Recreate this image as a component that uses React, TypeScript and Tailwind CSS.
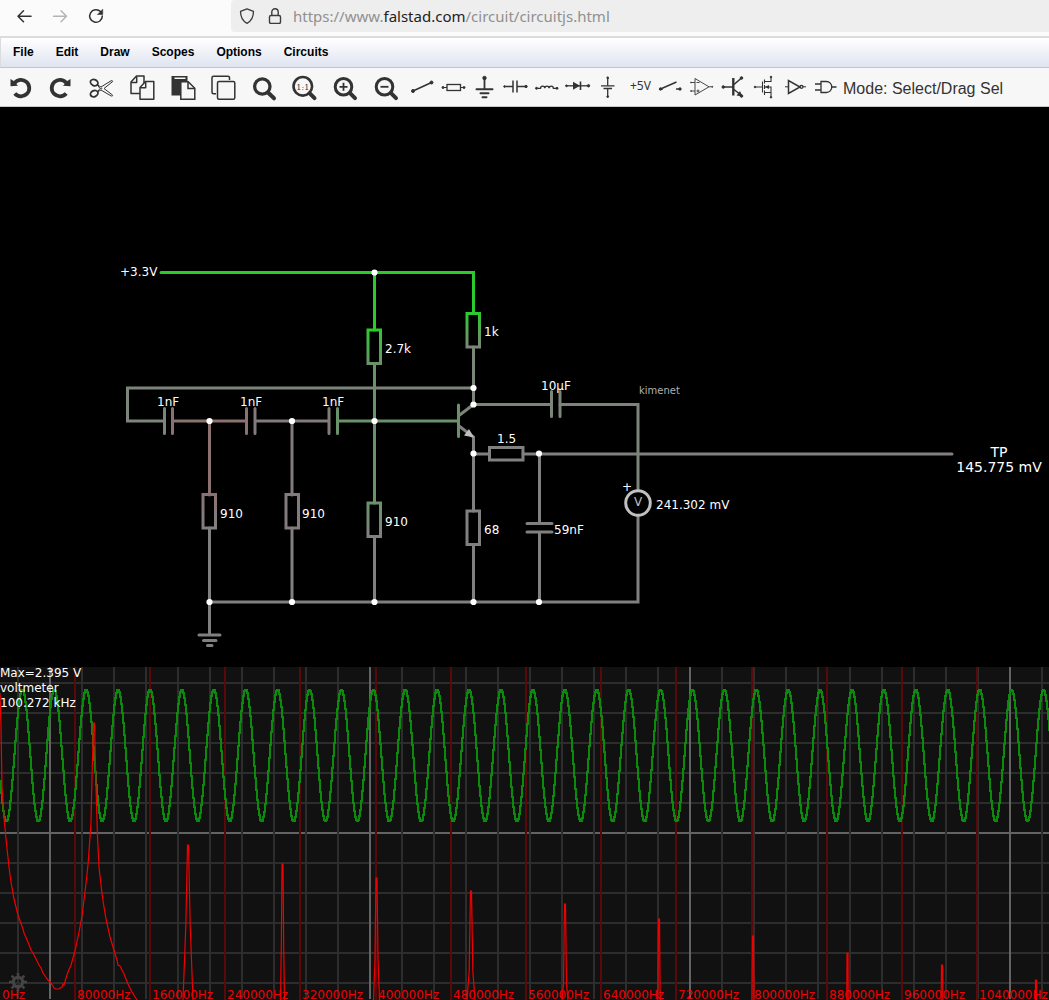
import React from 'react';

const menus = ['File', 'Edit', 'Draw', 'Scopes', 'Options', 'Circuits'];

// Large editing tools, each drawn in a 24x24 box
const editTools: { name: string; icon: React.ReactNode }[] = [
  {
    name: 'Undo',
    icon: (
      <>
        <path d="M6.500 7.200A8.200 8.200 0 1 1 6.800 17.400" fill="none" strokeWidth="3.800" />
        <path d="M2.500 3l2.500 1.500 5 5.200-7.500.5z" stroke="none" />
      </>
    ),
  },
  {
    name: 'Redo',
    icon: (
      <>
        <path d="M17.500 7.200A8.200 8.200 0 1 0 17.200 17.400" fill="none" strokeWidth="3.800" />
        <path d="M21.500 3l-2.500 1.500-5 5.200 7.500.5z" stroke="none" />
      </>
    ),
  },
  {
    name: 'Cut',
    icon: (
      <g fill="none">
        <ellipse cx="5.2" cy="6.6" rx="3.9" ry="3" strokeWidth="1.8" transform="rotate(25 5.2 6.6)" />
        <ellipse cx="5.2" cy="17.6" rx="3.9" ry="3" strokeWidth="1.8" transform="rotate(-25 5.2 17.6)" />
        <path d="M8.5 9l3.5 2L22 4.8c1.4-.4 2 .2 1.6.8L15 12.5l8.6 6.6c.4.8-.6 1.2-1.6.8L12 14l-3.5 1.8M8.5 9l2.5 3.5-2.5 3.3" strokeWidth="1" />
        <circle cx="12.2" cy="12.5" r=".6" strokeWidth=".8" />
      </g>
    ),
  },
  {
    name: 'Copy',
    icon: (
      <g strokeWidth="1.5" strokeLinejoin="round">
        <path d="M1 17.5V6l5.500-6H14v17.500z" fill="#f7f7f7" />
        <path d="M1.2 6.5h5.500V.5" fill="none" />
        <path d="M10 23.3V11.500L15.500 5.500H23.800v17.800z" fill="#f7f7f7" />
        <path d="M10.200 11.800h5.500V5.800" fill="none" />
      </g>
    ),
  },
  {
    name: 'Paste',
    icon: (
      <>
        <path d="M.5 0h16v19.500H.5z" stroke="none" />
        <path d="M3.500 1.500h11v1.500h-11z" fill="#f7f7f7" stroke="none" />
        <path d="M9.800 23.300V5.800h7.400l6.600 6.500v11z" fill="#f7f7f7" strokeWidth="1.5" />
        <path d="M17 6v6.500h6.500" fill="none" strokeWidth="1.5" />
      </>
    ),
  },
  {
    name: 'Duplicate',
    icon: (
      <g fill="none" strokeWidth="1.5">
        <path d="M5 17.800H2.500a1.500 1.500 0 0 1-1.500-1.500V1.700A1.500 1.500 0 0 1 2.500.2h14.500a1.500 1.500 0 0 1 1.500 1.500V4" />
        <rect x="6.500" y="5.500" width="17.300" height="17.800" rx="1.500" />
      </g>
    ),
  },
  {
    name: 'Find',
    icon: (
      <g fill="none">
        <circle cx="10.300" cy="10.500" r="7.700" strokeWidth="3.300" />
        <path d="M16 16.500l6 5.800" strokeWidth="4" strokeLinecap="round" />
      </g>
    ),
  },
  {
    name: 'Zoom 100%',
    icon: (
      <>
        <circle cx="10.800" cy="10.300" r="9.300" fill="none" strokeWidth="2.600" />
        <path d="M17.500 17.200l5 5" strokeWidth="4" strokeLinecap="round" />
        <text x="10.800" y="13.500" textAnchor="middle" stroke="none" className="font-['DejaVu_Serif',serif] text-[8px]">
          1:1
        </text>
      </>
    ),
  },
  {
    name: 'Zoom in',
    icon: (
      <g fill="none">
        <circle cx="10.500" cy="10.800" r="8.300" strokeWidth="3" />
        <path d="M17 17.200l5 5" strokeWidth="4" strokeLinecap="round" />
        <path d="M6.500 10.800h8M10.500 6.800v8" strokeWidth="1.800" />
      </g>
    ),
  },
  {
    name: 'Zoom out',
    icon: (
      <g fill="none">
        <circle cx="10.500" cy="10.800" r="8.300" strokeWidth="3" />
        <path d="M17 17.200l5 5" strokeWidth="4" strokeLinecap="round" />
        <path d="M6.500 10.800h8" strokeWidth="1.800" />
      </g>
    ),
  },
];

// Circuit elements, each drawn in a 30x24 box
const elementTools: { name: string; icon: React.ReactNode }[] = [
  {
    name: 'Wire',
    icon: (
      <>
        <path d="M6 15L24.500 6.500" strokeWidth="1.600" />
        <circle cx="6" cy="15" r="1.500" />
        <circle cx="24.500" cy="6.500" r="1.500" />
      </>
    ),
  },
  {
    name: 'Resistor',
    icon: (
      <>
        <path d="M5 11.500h4M22.500 11.500h4" />
        <rect x="9" y="8.500" width="13.500" height="6" fill="none" strokeWidth="1.300" />
        <circle cx="5" cy="11.500" r="1" />
        <circle cx="26" cy="11.500" r="1" />
      </>
    ),
  },
  {
    name: 'Ground',
    icon: (
      <>
        <circle cx="15.500" cy="2" r="1.700" />
        <path d="M15.500 2v11.500" strokeWidth="1.800" />
        <path d="M7.500 13.300h16M11.500 17.300h8M13.500 21.200h4" strokeWidth="2" strokeLinecap="round" />
      </>
    ),
  },
  {
    name: 'Capacitor',
    icon: (
      <>
        <path d="M4 10.500h9M17 10.500h9" strokeWidth="1.300" />
        <path d="M13 4.500v12M17 4.500v12" strokeWidth="1.500" />
        <circle cx="4.500" cy="10.500" r=".8" />
        <circle cx="26" cy="10.500" r="1.200" />
      </>
    ),
  },
  {
    name: 'Inductor',
    icon: (
      <>
        <path d="M5.500 12.300h4c0-3 4.300-3 4.300 0 0-3 4.300-3 4.300 0 0-3 4.300-3 4.300 0h4" fill="none" strokeWidth="1.300" />
        <circle cx="5.500" cy="12.300" r="1" />
        <circle cx="26" cy="12.300" r="1" />
      </>
    ),
  },
  {
    name: 'Diode',
    icon: (
      <>
        <path d="M4 9.800h23" strokeWidth="1.300" />
        <path d="M11 5.800v8l7-4z" stroke="none" />
        <path d="M18.500 5.500v8.500" strokeWidth="1.600" />
        <circle cx="4.500" cy="9.800" r=".9" />
        <circle cx="26.500" cy="9.800" r="1.200" />
      </>
    ),
  },
  {
    name: 'Battery',
    icon: (
      <>
        <path d="M14.700 1.500v8.300M14.700 12.500v8" strokeWidth="1.300" />
        <path d="M8 9.800h13.500M10.500 12.500h8.500" strokeWidth="1.300" />
        <circle cx="14.700" cy="1.800" r=".9" />
        <circle cx="14.700" cy="20.600" r=".9" />
      </>
    ),
  },
  {
    name: 'Voltage source',
    icon: (
      <text x="6" y="14" stroke="none" className="font-['Noto_Sans',sans-serif] text-[12px]">
        +5V
      </text>
    ),
  },
  {
    name: 'Switch',
    icon: (
      <>
        <path d="M5.500 13l16-7M21 13h4M5 13h3" strokeWidth="1.400" />
        <circle cx="5.500" cy="13" r="1.200" />
        <circle cx="25" cy="13" r="1.200" />
      </>
    ),
  },
  {
    name: 'Op-amp',
    icon: (
      <g fill="none" strokeWidth=".9">
        <path d="M9 2.500v16.500l14-8.200zM5 6.500h4M5 15h4M23 10.800h3.500M10.500 6.500h3M10.500 15h3M12 13.500v3" />
        <circle cx="5" cy="6.500" r=".5" />
        <circle cx="5" cy="15" r=".5" />
        <circle cx="26.300" cy="10.800" r=".5" />
      </g>
    ),
  },
  {
    name: 'Transistor',
    icon: (
      <>
        <path d="M6 11h10.500M17 8.500l7.500-6.500M17 13.500l7.500 6" strokeWidth="1.600" />
        <path d="M16.300 2v17.500" strokeWidth="2.400" />
        <path d="M25.500 20.500l-6-1 3.500-4.500z" stroke="none" />
        <circle cx="6.300" cy="11" r="1.300" />
        <circle cx="24.500" cy="2" r="1.300" />
        <circle cx="24.500" cy="20" r="1.300" />
      </>
    ),
  },
  {
    name: 'MOSFET',
    icon: (
      <>
        <path d="M7 11h7M14.500 5.500v11M16.500 3.500v4M16.500 9v4M16.500 14.500v4.500M16.500 5.500h6.500V1M16.500 16.500h6.500V21M17 11h6v5" fill="none" strokeWidth="1.100" />
        <path d="M17 11l4-2v4z" stroke="none" />
        <circle cx="7" cy="11" r=".8" />
        <circle cx="23" cy="1" r=".8" />
        <circle cx="23" cy="21.300" r=".8" />
      </>
    ),
  },
  {
    name: 'Inverter',
    icon: (
      <g fill="none">
        <path d="M6 10.800h3M24 10.800h3" />
        <path d="M9.500 4.500v13l11.500-6.500z" strokeWidth="1.500" />
        <circle cx="22.500" cy="10.800" r="1.500" strokeWidth="1.300" />
      </g>
    ),
  },
  {
    name: 'AND gate',
    icon: (
      <g fill="none" strokeWidth="1.300">
        <path d="M5 8h6M5 14h6M21 11h5.500" />
        <path d="M11 5.500h5.500a5.300 5.500 0 0 1 0 11H11z" />
      </g>
    ),
  },
];

const GREEN = '#2bcb2b';
const BASE = '#6a926a';
const COLLECTOR = '#7c857a';
const PINK = '#8c7171';
const MAUVE = '#837a7b';
const GREY = '#808080';

const wires: [string, string][] = [
  ['M161 272.500H473.500V313M374.500 272.500V330', GREEN],
  ['M374.500 364V503M338 421H458', BASE],
  ['M473.500 347V404.500H551M560 404.500H638V490M473.500 388H127.500V421H164', COLLECTOR],
  ['M164.500 408.500V433.500M551.500 391.500V416.500M560 391.500V416.500M459 415.500L473.500 404.500', COLLECTOR],
  ['M173 421H246M209.500 421V495M172.500 408.500V433.500M246.500 408.500V433.500', PINK],
  ['M255 421H329M292 421V495M255 408.500V433.500M329 408.500V433.500', MAUVE],
  ['M337.500 408.500V433.500M458.500 405V436.500', BASE],
  ['M459 426L473.500 437V511M473.500 454H489M523 454H952M539.500 454V523', GREY],
  ['M527 523.500H552M527 532H552M539.500 532V602', GREY],
  ['M209.500 528V634M292 528V602M374.500 537V602M473.500 545V602M209.500 602H638V516', GREY],
  ['M199 635H220M203.500 640.500H216M207.500 645.500H212', GREY],
];

const resistors = [
  { x: 368, y: 330, stroke: 'url(#supplyToBase)' },
  { x: 467, y: 313.5, stroke: 'url(#supplyToCollector)' },
  { x: 203, y: 494.5, stroke: 'url(#pinkToGrey)' },
  { x: 286, y: 494.5, stroke: MAUVE },
  { x: 368, y: 503, stroke: 'url(#baseToGrey)' },
  { x: 467, y: 511, stroke: GREY },
];

const junctions = [
  [374.5, 272.5], [473.5, 388], [473.5, 404.5], [209.5, 421], [292, 421], [374.5, 421],
  [473.5, 453.5], [539, 453.5], [209.5, 602], [292, 602], [374.5, 602], [473.5, 602], [539, 602],
];

const labels: [number, number, string][] = [
  [120, 276, '+3.3V'], [385, 353, '2.7k'], [484, 336, '1k'], [157, 406, '1nF'], [240, 406, '1nF'],
  [322, 406, '1nF'], [541, 390, '10µF'], [497, 443, '1.5'], [220, 518, '910'], [302, 518, '910'],
  [385, 526, '910'], [484, 534, '68'], [554, 534, '59nF'], [656, 509, '241.302 mV'], [622, 491, '+'],
];

const Gradient: React.FC<{ id: string; from: string; to: string }> = ({ id, from, to }) => (
  <linearGradient id={id} x1="0" y1="0" x2="0" y2="1">
    <stop offset="0" stopColor={from} />
    <stop offset="1" stopColor={to} />
  </linearGradient>
);

const Circuit: React.FC = () => (
  <svg viewBox="0 107 1049 560" className="block w-full bg-black font-['DejaVu_Sans',sans-serif] text-[12px]">
    <defs>
      <Gradient id="supplyToBase" from={GREEN} to={BASE} />
      <Gradient id="supplyToCollector" from={GREEN} to={COLLECTOR} />
      <Gradient id="pinkToGrey" from={PINK} to={GREY} />
      <Gradient id="baseToGrey" from={BASE} to={GREY} />
    </defs>
    {wires.map(([d, color]) => (
      <path key={d} d={d} stroke={color} strokeWidth="3" strokeLinecap="round" fill="none" />
    ))}
    {resistors.map(r => (
      <rect key={`${r.x}-${r.y}`} x={r.x} y={r.y} width="12.500" height="33.500" fill="none" stroke={r.stroke} strokeWidth="3" />
    ))}
    <rect x="489.500" y="447.500" width="33.500" height="12.500" fill="none" stroke={GREY} strokeWidth="3" />
    <path d="M474 437.500l-10-2 5-6.500z" fill="#c0c0c0" />
    {junctions.map(([x, y]) => (
      <circle key={`${x}-${y}`} cx={x} cy={y} r="3.100" fill="#fff" />
    ))}
    <circle cx="638" cy="503" r="12.300" fill="#000" stroke="#c0c0c0" strokeWidth="3" />
    <text x="638" y="506" textAnchor="middle" fill="#c0c0c0">V</text>
    {labels.map(([x, y, text]) => (
      <text key={`${x}-${y}`} x={x} y={y} fill="#fff">{text}</text>
    ))}
    <text x="639" y="394" fill="#b0b0b0" className="text-[10px]">kimenet</text>
    <g fill="#fff" textAnchor="middle" className="text-[14px]">
      <text x="999" y="457">TP</text>
      <text x="999" y="472">145.775 mV</text>
    </g>
  </svg>
);

const range = (n: number) => Array.from({ length: n }, (_, i) => i);

// One vertical bar per sample column, spanning the values inside it
const wave = (x: number) => 88.5 - 66 * Math.cos(((x - 85.7) * 2 * Math.PI) / 31.91);
const wavePath = range(1049)
  .map(x => {
    const a = Math.round(wave(x));
    const b = Math.round(wave(x + 1));
    return `M${x + 1} ${Math.min(a, b) - 1}V${Math.max(a, b) + 1}`;
  })
  .join('');

const spectrum =
  'M0 26L1 60 2 120 4 150 6 172 9 200 11 215 14 232 18 248 23 262 24 266 28 275 31 283 33 286 39 298 41 301 43 306 48 313 50 315 ' +
  '53 319 54 321 56 322 59 322 62 320 63 317 64 318 66 311 68 305 71 298 75 284 79 265 82 249 85 225 88 198 90 170 91 155 92 110 ' +
  '93.500 56 94.500 56 96 120 97.500 170 99 200 101 218 103 234 106 252 110 270 113 280 117 293 118 298 120 299 124 307 128 317 132 325 137 333';

// Harmonic peaks: x of the tip, y of the tip, half width at the bottom
const harmonics = [
  [188, 178, 5], [282.5, 197, 2], [376.5, 211, 3], [471, 224, 4], [565, 237, 3], [659, 252, 2],
  [753, 269, 2], [847.5, 286, 1], [942, 298, 2], [1036, 313, 1],
];

const Scope: React.FC = () => (
  <svg viewBox="0 0 1049 333" className="block w-full bg-[#111111] font-['DejaVu_Sans',sans-serif] text-[12px]">
    <g strokeWidth="2" fill="none">
      {range(11).map(i => (
        <path key={i} d={`M0 ${16 + i * 30}H1049`} stroke={i === 5 ? '#636363' : '#2d2d2d'} />
      ))}
      {range(33).map(i => (
        <path key={i} d={`M${18 + i * 32} 0V332`} stroke={i % 10 === 1 ? '#636363' : '#2d2d2d'} />
      ))}
      {range(13).map(i => (
        <path key={i} d={`M${Math.floor((i + 1) * 75.2)} 0V333`} stroke="#590909" />
      ))}
    </g>
    <path d={wavePath} stroke="#0b8a0b" strokeWidth="2" shapeRendering="crispEdges" />
    <g fill="none" stroke="#f00000" strokeWidth="1.200">
      <path d={spectrum} />
      {harmonics.map(([x, y, w]) => (
        <path key={x} d={`M${x - w} 333L${x - 0.5 - w / 3} ${y + 80}L${x - 0.5} ${y}H${x + 0.5}L${x + 0.5 + w / 3} ${y + 80}L${x + w} 333`} />
      ))}
    </g>
    <g fill="#fff">
      <text x="0" y="10">Max=2.395 V</text>
      <text x="0" y="25">voltmeter</text>
      <text x="0" y="40">100.272 kHz</text>
    </g>
    <g fill="#f00000">
      {range(14).map(i => (
        <text key={i} x={Math.floor(i * 75.2) + 2} y="332">{`${i * 80000}Hz`}</text>
      ))}
    </g>
    <g stroke="#444" fill="none">
      <circle cx="18" cy="315" r="4.700" strokeWidth="3.200" />
      <path d="M18 306v3M18 321v3M9 315h3M24 315h3M11.600 308.600l2.200 2.200M22.200 319.200l2.200 2.200M11.600 321.400l2.200-2.200M22.200 310.800l2.200-2.200" strokeWidth="2.600" />
    </g>
  </svg>
);

const BrowserBar: React.FC = () => (
  <div className="flex h-9 items-start bg-[#fbfbfb] text-[#303030]">
    <div className="flex h-8 w-[231px] shrink-0 items-center gap-5 pl-4">
      <button aria-label="Back">
        <svg width="16" height="16" fill="none" stroke="currentColor" strokeWidth="1.500" strokeLinecap="round" strokeLinejoin="round">
          <path d="M2 8.300h13M7.500 2.800L2 8.300l5.500 5.500" />
        </svg>
      </button>
      <button aria-label="Forward" className="text-[#b5b5b5]">
        <svg width="16" height="16" fill="none" stroke="currentColor" strokeWidth="1.500" strokeLinecap="round" strokeLinejoin="round">
          <path d="M1.500 8.300h13M9 2.800l5.500 5.500L9 13.800" />
        </svg>
      </button>
      <button aria-label="Reload">
        <svg width="16" height="16" fill="none" stroke="currentColor" strokeWidth="1.500" strokeLinecap="round">
          <path d="M12.500 3.600A6.300 6.300 0 1 0 14.300 8" />
          <path d="M14.700 1.500v5h-5z" fill="currentColor" strokeWidth=".6" />
        </svg>
      </button>
    </div>
    <div className="flex h-8 flex-1 items-center rounded-l bg-[#eeeeee] pl-2 text-[#3c3c3c]">
      <svg width="16" height="16" fill="none" stroke="currentColor" strokeWidth="1.300" strokeLinejoin="round">
        <path d="M8 .8l6.500 2.500c0 5.500-1.500 9.500-6.500 12C3 12.800 1.500 8.800 1.500 3.300z" />
      </svg>
      <svg width="16" height="16" fill="none" stroke="currentColor" strokeWidth="1.400" className="ml-3">
        <rect x="2.500" y="7.500" width="11" height="8" rx="1.500" />
        <path d="M4.800 7.500V4a3.200 3.200 0 0 1 6.400 0v3.500" />
      </svg>
      <a href="#circuit" className="ml-[10px] font-['Noto_Sans',sans-serif] text-[15px] leading-8 whitespace-nowrap text-[#909090]">
        https://www.<span className="text-[#222222]">falstad.com</span>/circuit/circuitjs.html
      </a>
    </div>
  </div>
);

const App: React.FC = () => (
  <div className="min-h-screen bg-black">
    <BrowserBar />
    <nav className="flex h-8 items-center border-t-2 border-b border-l border-[#dcdcdc] border-b-[#c4c4c4] bg-linear-to-b from-white to-[#dfe4f0] pb-0.5 pl-px">
      {menus.map(menu => (
        <button key={menu} className="px-[11px] font-['Liberation_Sans',sans-serif] text-[12px] font-bold text-black">
          {menu}
        </button>
      ))}
    </nav>
    <div className="flex h-[39px] items-center overflow-hidden border-b border-[#c8c8c8] bg-[#f7f7f7] pt-0.5 text-[#333333]">
      <div className="grid w-[406px] shrink-0 grid-cols-10">
        {editTools.map(tool => (
          <button key={tool.name} aria-label={tool.name} className="flex justify-center">
            <svg width="24" height="24" fill="currentColor" stroke="currentColor" overflow="visible">
              {tool.icon}
            </svg>
          </button>
        ))}
      </div>
      <div className="grid w-[434px] shrink-0 grid-cols-14">
        {elementTools.map(tool => (
          <button key={tool.name} aria-label={tool.name} className="flex justify-center">
            <svg width="30" height="24" fill="currentColor" stroke="currentColor" overflow="visible">
              {tool.icon}
            </svg>
          </button>
        ))}
      </div>
      <span className="pt-0.5 pl-[3px] font-['Liberation_Sans',sans-serif] text-[16px] whitespace-nowrap">Mode: Select/Drag Sel</span>
    </div>
    <main id="circuit">
      <Circuit />
      <Scope />
    </main>
  </div>
);

export default App;
